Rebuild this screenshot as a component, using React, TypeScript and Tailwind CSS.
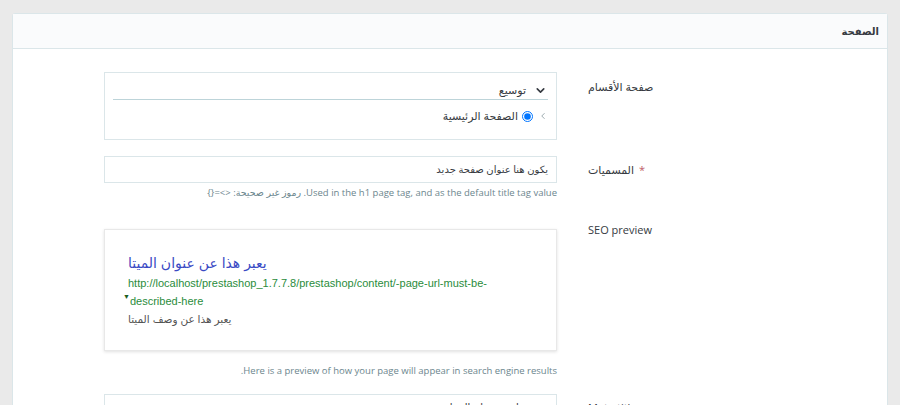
import React from 'react';
import { ChevronDown, ChevronLeft } from 'lucide-react';

const font = { fontFamily: '"Open Sans", "DejaVu Sans", sans-serif' };
const serp = { fontFamily: '"Liberation Sans", "DejaVu Sans", sans-serif' };

function Label({ children, className = '' }: { children: React.ReactNode; className?: string }) {
  return (
    <div className={`w-[288px] shrink-0 text-left text-[11px] leading-[18px] text-[#363a41] ${className}`}>
      {children}
    </div>
  );
}

function Help({ children, className = '' }: { children: React.ReactNode; className?: string }) {
  return <div className={`text-[9.5px] leading-[14px] text-[#6c868e] ${className}`}>{children}</div>;
}

export default function App() {
  return (
    <div className="h-[405px] overflow-hidden bg-[#eaeaea] pt-[13px] px-[12px]" style={font}>
      <div dir="rtl" className="bg-white border border-[#dbe6e9] rounded-[3px] h-[600px]">
        <div className="h-[35px] flex items-center pr-[8px] bg-[#fafbfc] border-b border-[#dbe6e9] text-[10px] font-bold text-[#363a41]">
          الصفحة
        </div>

        <div className="pt-[23px] pr-[11px]">
          {/* category tree */}
          <div className="flex">
            <Label className="pt-[6px]">صفحة الأقسام</Label>
            <div className="w-[453px] mr-[31px]">
              <div className="h-[68px] border border-[#dbe6e9] px-[8px] pt-[8px]">
                <div className="h-[19px] flex items-center gap-[8px] pr-[1px] border-b border-[#bdd4d9]">
                  <ChevronDown size={13} strokeWidth={3} className="text-[#363a41]" />
                  <span className="text-[11px] text-[#363a41]">توسيع</span>
                </div>
                <div className="h-[32px] flex items-center">
                  <ChevronLeft size={10} strokeWidth={2} className="text-[#8a9ba0]" />
                  <input type="radio" checked readOnly className="w-[11px] h-[11px] m-0 mr-[5px]" />
                  <span className="text-[11px] text-[#363a41] mr-[4px]">الصفحة الرئيسية</span>
                </div>
              </div>
            </div>
          </div>

          {/* title */}
          <div className="flex mt-[16px]">
            <Label className="pt-[5px]">
              <span className="text-[#c05c67] ml-[5px]">*</span>
              المسميات
            </Label>
            <div className="w-[453px] mr-[31px]">
              <div className="h-[27px] border border-[#dbe6e9] px-[8px] flex items-center text-[10px] text-[#363a41]">
                يكون هنا عنوان صفحة جديد
              </div>
              <Help className="mt-[3px]">
                Used in the h1 page tag, and as the default title tag value. رموز غير صحيحة: &lt;&gt;={'{}'}
              </Help>
            </div>
          </div>

          {/* seo preview */}
          <div className="flex mt-[21px]">
            <Label>SEO preview</Label>
            <div className="w-[453px] mr-[31px]">
              <div className="mt-[8px] h-[122px] bg-white border border-[#e8e8e8] shadow-[0_1px_3px_rgba(0,0,0,0.12)] px-[23px] pt-[22px] text-left">
                <div className="text-[14px] leading-[22px] text-[#3a4ac4]" style={serp}>
                  يعبر هذا عن عنوان الميتا
                </div>
                <div className="text-[11px] leading-[18px] text-[#2a8c3c]" style={serp}>
                  http://localhost/prestashop_1.7.7.8/prestashop/content/-page-url-must-be-described-here
                  <span className="inline-block -ml-[5px] text-[7px] leading-[10px] align-top text-[#1b5e20]">▼</span>
                </div>
                <div className="text-[10.5px] leading-[18px] text-[#545454]" style={serp}>
                  يعبر هذا عن وصف الميتا
                </div>
              </div>
              <Help className="mt-[13px]">Here is a preview of how your page will appear in search engine results.</Help>
            </div>
          </div>

          {/* meta title */}
          <div className="flex mt-[16px]">
            <Label className="pt-[5px]">Meta title</Label>
            <div className="w-[453px] mr-[31px]">
              <div className="h-[27px] border border-[#dbe6e9] px-[8px] flex items-center text-[10px] text-[#363a41]">
                يعبر هذا عن عنوان الميتا
              </div>
            </div>
          </div>
        </div>
      </div>
    </div>
  );
}
